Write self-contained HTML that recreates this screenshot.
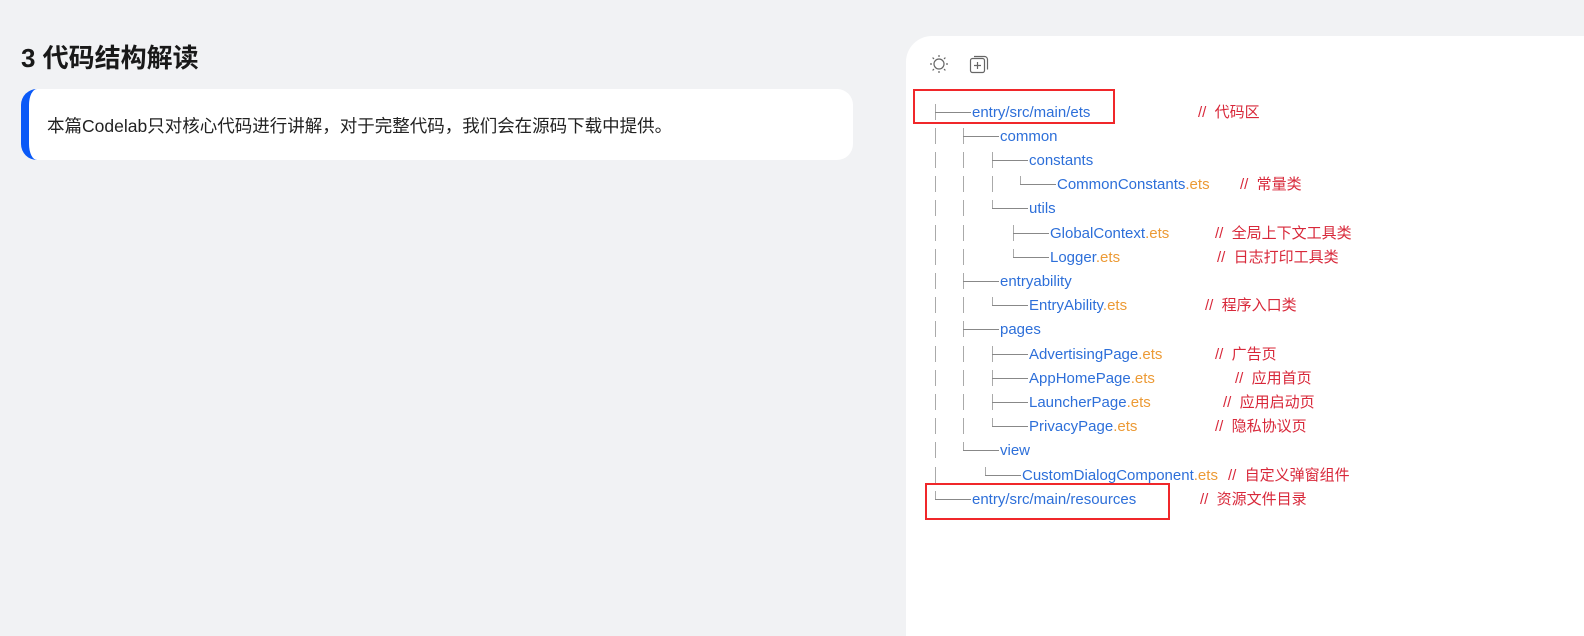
<!DOCTYPE html>
<html><head><meta charset="utf-8"><style>
*{margin:0;padding:0;box-sizing:border-box}
body{width:1584px;height:608px;background:#f1f2f4;position:relative;overflow:hidden;font-family:"Liberation Sans","Noto Sans CJK SC",sans-serif}
h1{position:absolute;left:21px;top:38px;font-size:26px;font-weight:bold;color:#191919}
.card{position:absolute;left:21px;top:89px;width:832px;height:71px;background:#fff;border-radius:16px;border-left:8px solid #0a59f7}
.card p{position:absolute;left:18px;top:24px;font-size:17.5px;color:#222}
.panel{position:absolute;left:906px;top:36px;width:700px;height:600px;background:#fff;border-top-left-radius:26px}
.r{position:absolute;font-size:15px;line-height:20px;white-space:nowrap}
.b{color:#2d6fd9}.o{color:#ec9a35}.c{color:#d8283a}
.v{position:absolute;width:1px;height:16px;background:#aaa}
.h{position:absolute;height:1px;background:#888}
.box{position:absolute;border:2px solid #f0272a}
</style></head><body>
<h1>3 代码结构解读</h1>
<div class="card"><p>本篇Codelab只对核心代码进行讲解，对于完整代码，我们会在源码下载中提供。</p></div>
<div class="panel"></div>
<svg style="position:absolute;left:929px;top:54px" width="20" height="20" viewBox="0 0 20 20" fill="none" stroke="#666" stroke-width="1.2"><circle cx="10" cy="10" r="5"/><path d="M10 1v2M10 17v2M1 10h2M17 10h2M3.6 3.6l1.4 1.4M15 15l1.4 1.4M3.6 16.4l1.4-1.4M15 5l1.4-1.4"/></svg>
<svg style="position:absolute;left:969px;top:55px" width="20" height="20" viewBox="0 0 20 20" fill="none" stroke="#666" stroke-width="1.2"><rect x="1.5" y="3.5" width="14" height="14" rx="2"/><path d="M5 1.5h10.5a3 3 0 0 1 3 3v10"/><path d="M8.5 7v7M5 10.5h7"/></svg>

<div id="tree"></div>
<script>
const rows=[
[[],935,0,'entry/src/main/ets','','// 代码区',1198],
[[935],963,0,'common','','',0],
[[935,963],992,0,'constants','','',0],
[[935,963,992],1020,1,'CommonConstants','.ets','// 常量类',1240],
[[935,963],992,1,'utils','','',0],
[[935,963],1013,0,'GlobalContext','.ets','// 全局上下文工具类',1215],
[[935,963],1013,1,'Logger','.ets','// 日志打印工具类',1217],
[[935],963,0,'entryability','','',0],
[[935,963],992,1,'EntryAbility','.ets','// 程序入口类',1205],
[[935],963,0,'pages','','',0],
[[935,963],992,0,'AdvertisingPage','.ets','// 广告页',1215],
[[935,963],992,0,'AppHomePage','.ets','// 应用首页',1235],
[[935,963],992,0,'LauncherPage','.ets','// 应用启动页',1223],
[[935,963],992,1,'PrivacyPage','.ets','// 隐私协议页',1215],
[[935],963,1,'view','','',0],
[[935],985,1,'CustomDialogComponent','.ets','// 自定义弹窗组件',1228],
[[],935,1,'entry/src/main/resources','','// 资源文件目录',1200]];
let h='';
rows.forEach((r,i)=>{const y=111.5+i*24.2;
r[0].forEach(x=>{h+=`<div class="v" style="left:${x}px;top:${y-8}px"></div>`});
h+=`<div class="v" style="left:${r[1]}px;top:${y-8}px;height:${r[2]?8:16}px"></div>`;
const tx=r[1]+37;
h+=`<div class="h" style="left:${r[1]}px;top:${y}px;width:${tx-r[1]-1}px"></div>`;
h+=`<div class="r" style="left:${tx}px;top:${y-9}px"><span class="b">${r[3]}</span><span class="o">${r[4]}</span></div>`;
if(r[5])h+=`<div class="r c" style="left:${r[6]}px;top:${y-9}px">${r[5].replace(' ','&nbsp;&nbsp;')}</div>`;
});
document.getElementById('tree').innerHTML=h;
</script>
<div class="box" style="left:913px;top:89px;width:202px;height:35px"></div>
<div class="box" style="left:925px;top:483px;width:245px;height:37px"></div>
</body></html>
